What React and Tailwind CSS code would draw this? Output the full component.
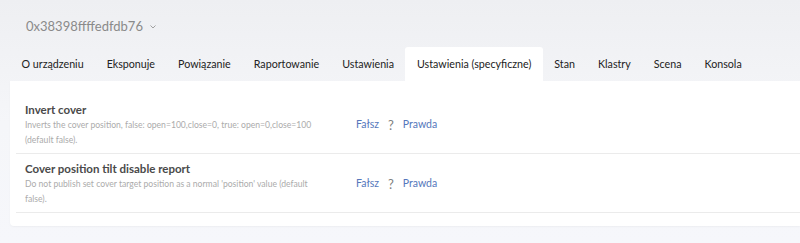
import React from "react";

const tabs = [
  "O urządzeniu",
  "Eksponuje",
  "Powiązanie",
  "Raportowanie",
  "Ustawienia",
  "Ustawienia (specyficzne)",
  "Stan",
  "Klastry",
  "Scena",
  "Konsola",
];

const rows = [
  {
    title: "Invert cover",
    desc: "Inverts the cover position, false: open=100,close=0, true: open=0,close=100 (default false).",
  },
  {
    title: "Cover position tilt disable report",
    desc: "Do not publish set cover target position as a normal 'position' value (default false).",
  },
];

export default function App() {
  return (
    <div
      className="w-[800px] h-[243px] overflow-hidden bg-gradient-to-b from-[#eeeff2] via-[#f5f6f9] to-[#f6f7fb]"
      style={{ fontFamily: '"Lato", "Noto Sans", sans-serif' }}
    >
      <div className="h-[47px] pl-[26px] pt-[17px] flex items-start">
        <span className="text-[13px] leading-[18px] text-[#8a8a8a]">0x38398ffffedfdb76</span>
        <svg className="ml-[6px] mt-[7px]" width="8" height="6" viewBox="0 0 8 6">
          <path d="M1.5 1.5 L4 4 L6.5 1.5" fill="none" stroke="#a0a0a0" strokeWidth="1" />
        </svg>
      </div>
      <div className="flex pl-[10px] h-[34px]">
        {tabs.map((t, i) => (
          <div
            key={t}
            className={
              "px-[11.5px] flex items-center whitespace-nowrap text-[10.7px] text-[#222] " +
              (i === 5 ? "bg-white rounded-t-[3px]" : "")
            }
          >
            {t}
          </div>
        ))}
      </div>
      <div className="ml-[10px] bg-white rounded-bl-[4px] pt-[14px] pb-[13px] shadow-[0_1px_2px_rgba(0,0,0,0.04)]">
        {rows.map((r) => (
          <div
            key={r.title}
            className="ml-[6px] flex items-center border-b border-[#ebebeb] pl-[9px] pt-[7px] pb-[5px]"
          >
            <div className="w-[331px] shrink-0">
              <div className="text-[11.5px] leading-[16px] font-bold text-[#4a4a4a]">{r.title}</div>
              <div className="text-[8.6px] leading-[15px] text-[#ababab] w-[298px]">{r.desc}</div>
            </div>
            <div className="flex items-center text-[10.5px]">
              <span className="text-[#5577bb]">Fałsz</span>
              <span className="ml-[9px] text-[#808080] text-[13px] leading-[14px]">?</span>
              <span className="ml-[9px] text-[#5577bb]">Prawda</span>
            </div>
          </div>
        ))}
      </div>
    </div>
  );
}
